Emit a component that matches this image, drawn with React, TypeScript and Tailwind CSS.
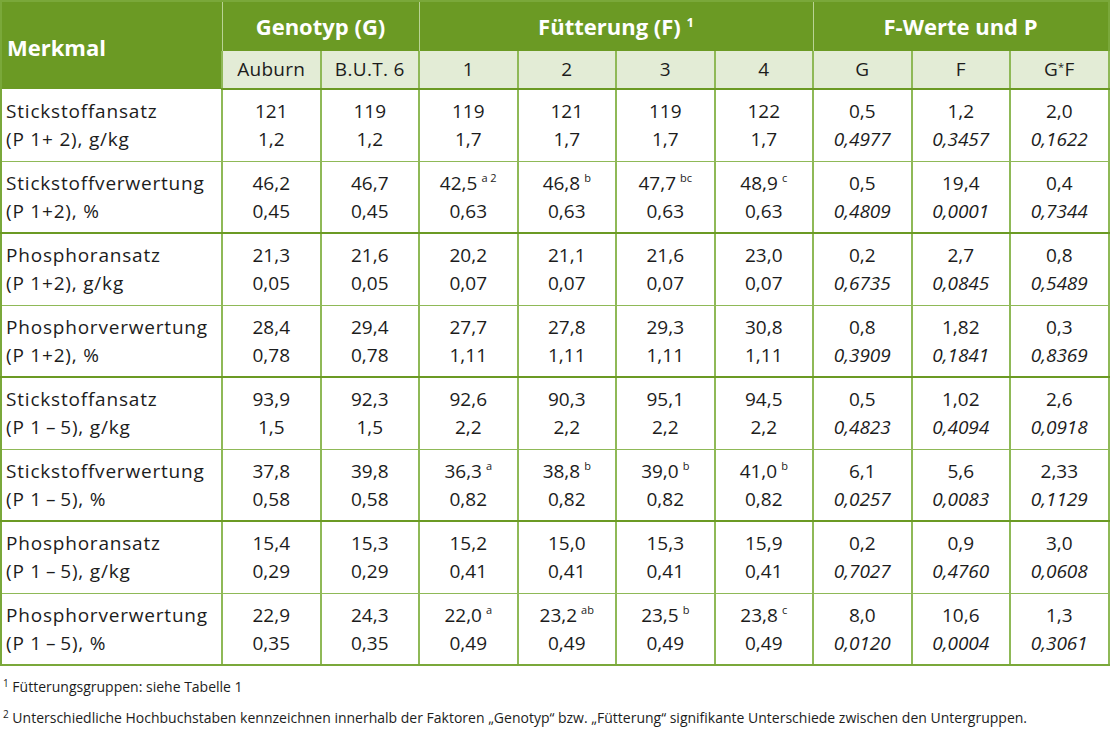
import * as React from "react";

type Cell = { v: string; p: string; sup?: string };
type Row = { l1: string; l2: string; vals: Cell[]; f: Cell[]; thick?: boolean };

const d = "\u2009–\u2009";

const rows: Row[] = [
  {
    l1: "Stickstoffansatz",
    l2: "(P 1+ 2), g/kg",
    vals: [
      { v: "121", p: "1,2" },
      { v: "119", p: "1,2" },
      { v: "119", p: "1,7" },
      { v: "121", p: "1,7" },
      { v: "119", p: "1,7" },
      { v: "122", p: "1,7" },
    ],
    f: [
      { v: "0,5", p: "0,4977" },
      { v: "1,2", p: "0,3457" },
      { v: "2,0", p: "0,1622" },
    ],
  },
  {
    l1: "Stickstoffverwertung",
    l2: "(P 1+2), %",
    vals: [
      { v: "46,2", p: "0,45" },
      { v: "46,7", p: "0,45" },
      { v: "42,5", p: "0,63", sup: "a 2" },
      { v: "46,8", p: "0,63", sup: "b" },
      { v: "47,7", p: "0,63", sup: "bc" },
      { v: "48,9", p: "0,63", sup: "c" },
    ],
    f: [
      { v: "0,5", p: "0,4809" },
      { v: "19,4", p: "0,0001" },
      { v: "0,4", p: "0,7344" },
    ],
    thick: true,
  },
  {
    l1: "Phosphoransatz",
    l2: "(P 1+2), g/kg",
    vals: [
      { v: "21,3", p: "0,05" },
      { v: "21,6", p: "0,05" },
      { v: "20,2", p: "0,07" },
      { v: "21,1", p: "0,07" },
      { v: "21,6", p: "0,07" },
      { v: "23,0", p: "0,07" },
    ],
    f: [
      { v: "0,2", p: "0,6735" },
      { v: "2,7", p: "0,0845" },
      { v: "0,8", p: "0,5489" },
    ],
  },
  {
    l1: "Phosphorverwertung",
    l2: "(P 1+2), %",
    vals: [
      { v: "28,4", p: "0,78" },
      { v: "29,4", p: "0,78" },
      { v: "27,7", p: "1,11" },
      { v: "27,8", p: "1,11" },
      { v: "29,3", p: "1,11" },
      { v: "30,8", p: "1,11" },
    ],
    f: [
      { v: "0,8", p: "0,3909" },
      { v: "1,82", p: "0,1841" },
      { v: "0,3", p: "0,8369" },
    ],
    thick: true,
  },
  {
    l1: "Stickstoffansatz",
    l2: `(P 1${d}5), g/kg`,
    vals: [
      { v: "93,9", p: "1,5" },
      { v: "92,3", p: "1,5" },
      { v: "92,6", p: "2,2" },
      { v: "90,3", p: "2,2" },
      { v: "95,1", p: "2,2" },
      { v: "94,5", p: "2,2" },
    ],
    f: [
      { v: "0,5", p: "0,4823" },
      { v: "1,02", p: "0,4094" },
      { v: "2,6", p: "0,0918" },
    ],
  },
  {
    l1: "Stickstoffverwertung",
    l2: `(P 1${d}5), %`,
    vals: [
      { v: "37,8", p: "0,58" },
      { v: "39,8", p: "0,58" },
      { v: "36,3", p: "0,82", sup: "a" },
      { v: "38,8", p: "0,82", sup: "b" },
      { v: "39,0", p: "0,82", sup: "b" },
      { v: "41,0", p: "0,82", sup: "b" },
    ],
    f: [
      { v: "6,1", p: "0,0257" },
      { v: "5,6", p: "0,0083" },
      { v: "2,33", p: "0,1129" },
    ],
    thick: true,
  },
  {
    l1: "Phosphoransatz",
    l2: `(P 1${d}5), g/kg`,
    vals: [
      { v: "15,4", p: "0,29" },
      { v: "15,3", p: "0,29" },
      { v: "15,2", p: "0,41" },
      { v: "15,0", p: "0,41" },
      { v: "15,3", p: "0,41" },
      { v: "15,9", p: "0,41" },
    ],
    f: [
      { v: "0,2", p: "0,7027" },
      { v: "0,9", p: "0,4760" },
      { v: "3,0", p: "0,0608" },
    ],
  },
  {
    l1: "Phosphorverwertung",
    l2: `(P 1${d}5), %`,
    vals: [
      { v: "22,9", p: "0,35" },
      { v: "24,3", p: "0,35" },
      { v: "22,0", p: "0,49", sup: "a" },
      { v: "23,2", p: "0,49", sup: "ab" },
      { v: "23,5", p: "0,49", sup: "b" },
      { v: "23,8", p: "0,49", sup: "c" },
    ],
    f: [
      { v: "8,0", p: "0,0120" },
      { v: "10,6", p: "0,0004" },
      { v: "1,3", p: "0,3061" },
    ],
  },
];

const ValueCell = ({ c, italic, bottom }: { c: Cell; italic?: boolean; bottom: string }) => (
  <td className={`border-x-2 border-x-[#8fb957] ${bottom} text-center align-middle leading-[28px]`}>
    <div>
      {c.v}
      {c.sup && <sup className="ml-1 text-[11px] top-[-0.7em]">{c.sup}</sup>}
    </div>
    <div className={italic ? "italic" : ""}>{c.p}</div>
  </td>
);

export default function App() {
  return (
    <div
      className="w-[1110px] h-[730px] bg-white text-[#1c1c1c]"
      style={{ fontFamily: '"Open Sans", "Liberation Sans", sans-serif' }}
    >
      <table className="w-[1108px] border-collapse border-2 border-[#7aa83a] text-[19px] table-fixed">
        <colgroup>
          <col className="w-[221px]" />
          {Array.from({ length: 9 }).map((_, i) => (
            <col key={i} className="w-[98.5px]" />
          ))}
        </colgroup>
        <thead>
          <tr className="h-[50px] bg-[#6b9a24] text-white font-bold text-[22px]">
            <th rowSpan={2} className="text-left pl-[5px] pt-[4px] border-r border-r-[#b9d394]">
              Merkmal
            </th>
            <th colSpan={2} className="border-r border-r-[#b9d394]">
              Genotyp (G)
            </th>
            <th colSpan={4} className="border-r border-r-[#b9d394]">
              Fütterung (F) <sup className="text-[13px] top-[-0.6em]">1</sup>
            </th>
            <th colSpan={3}>F-Werte und P</th>
          </tr>
          <tr className="h-[38px] bg-[#e3ecd6] font-normal text-[19px]">
            {["Auburn", "B.U.T. 6", "1", "2", "3", "4", "G", "F", "G*F"].map((h, i) => (
              <th
                key={i}
                className="font-normal tracking-[0.3px] border-x-2 border-x-[#8fb957] border-b-2 border-b-[#6b9a24]"
              >
                {h === "G*F" ? (
                  <>
                    G<sup className="text-[11px]">*</sup>F
                  </>
                ) : (
                  h
                )}
              </th>
            ))}
          </tr>
        </thead>
        <tbody>
          {rows.map((r, i) => {
            const bottom =
              i === rows.length - 1
                ? "border-b-2 border-b-[#7aa83a]"
                : r.thick
                ? "border-b-2 border-b-[#6b9a24]"
                : "border-b border-b-[#8fb957]";
            return (
              <tr key={i} className="h-[72px]">
                <td
                  className={`pl-[4px] leading-[28px] tracking-[0.8px] border-r-2 border-r-[#8fb957] ${bottom}`}
                >
                  <div>{r.l1}</div>
                  <div>{r.l2}</div>
                </td>
                {r.vals.map((c, j) => (
                  <ValueCell key={j} c={c} bottom={bottom} />
                ))}
                {r.f.map((c, j) => (
                  <ValueCell key={j} c={c} italic bottom={bottom} />
                ))}
              </tr>
            );
          })}
        </tbody>
      </table>
      <div className="text-[14px] pl-[3px] mt-[11px] leading-[20px]">
        <p>
          <sup className="text-[10px]">1</sup> Fütterungsgruppen: siehe Tabelle 1
        </p>
        <p className="mt-[11px]">
          <sup className="text-[10px]">2</sup> Unterschiedliche Hochbuchstaben kennzeichnen innerhalb
          der Faktoren „Genotyp“ bzw. „Fütterung“ signifikante Unterschiede zwischen den Untergruppen.
        </p>
      </div>
    </div>
  );
}
